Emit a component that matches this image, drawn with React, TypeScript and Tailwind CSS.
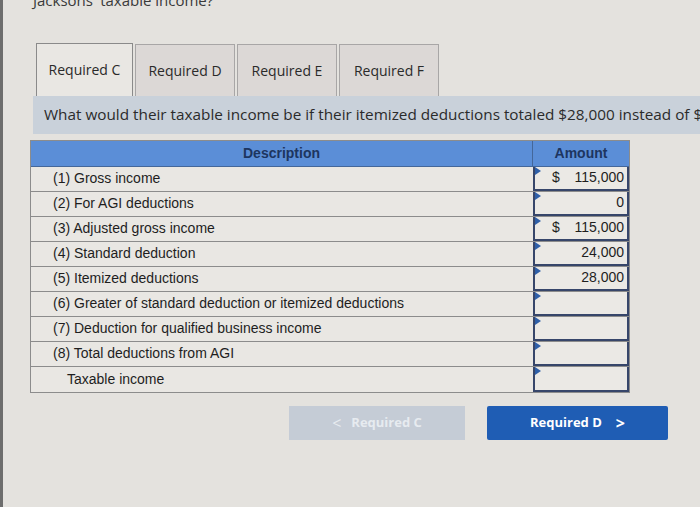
import React from 'react';

type Row = { label: string; dollar?: boolean; value?: string; indent?: boolean };

const rows: Row[] = [
    { label: '(1) Gross income', dollar: true, value: '115,000' },
    { label: '(2) For AGI deductions', value: '0' },
    { label: '(3) Adjusted gross income', dollar: true, value: '115,000' },
    { label: '(4) Standard deduction', value: '24,000' },
    { label: '(5) Itemized deductions', value: '28,000' },
    { label: '(6) Greater of standard deduction or itemized deductions' },
    { label: '(7) Deduction for qualified business income' },
    { label: '(8) Total deductions from AGI' },
    { label: 'Taxable income', indent: true },
];

const tabs = ['Required C', 'Required D', 'Required E', 'Required F'];

const Flag = () => (
    <span className="absolute left-0 top-0 w-0 h-0 border-t-[4px] border-b-[4px] border-l-[6px] border-t-transparent border-b-transparent border-l-[#2f5fa8]" />
);

export default function App() {
    return (
        <div className="w-[700px] h-[507px] overflow-hidden bg-[#e4e2de] border-l-[3px] border-[#6d6d6d] font-['Open_Sans',sans-serif] text-[#2a2a2a]">
            <p className="-mt-[11px] ml-[30px] text-[15px] text-[#3a3a3a]">Jacksons' taxable income?</p>

            {/* tabs */}
            <div className="mt-[31px] ml-[33px] flex gap-[2px] items-end">
                {tabs.map((t, i) => (
                    <div
                        key={t}
                        className={
                            i === 0
                                ? 'w-[97px] h-[53px] flex items-center justify-center text-[14px] bg-[#e9e7e3] border border-b-0 border-[#8a8a8a]'
                                : 'w-[100px] h-[52px] flex items-center justify-center text-[14px] bg-[#dcd8d6] border border-b-0 border-[#a8a6a6]'
                        }
                    >
                        {t}
                    </div>
                ))}
            </div>

            {/* question bar */}
            <div className="ml-[30px] h-[38px] bg-[#c9d1da] flex items-center pl-[11px] whitespace-nowrap text-[15.3px] text-[#2b2b2b]">
                What would their taxable income be if their itemized deductions totaled $28,000 instead of $
            </div>

            {/* table */}
            <div className="mt-[6px] ml-[27px] w-[600px] border border-[#8c8c8c] bg-[#e9e7e3] font-['Liberation_Sans',sans-serif] text-[14px] text-[#1e1e1e]">
                <div className="flex h-[26px] bg-[#5b8ed7] border-b border-[#44679a]">
                    <div className="flex-1 flex items-center justify-center font-bold text-[#1d3560] border-r border-[#44679a]">Description</div>
                    <div className="w-[96px] flex items-center justify-center font-bold text-[#1d3560]">Amount</div>
                </div>
                {rows.map((r, i) => (
                    <div key={r.label} className={`flex h-[25px] ${i < rows.length - 1 ? 'border-b border-[#8c8c8c]' : ''}`}>
                        <div className={`flex-1 flex items-center ${r.indent ? 'pl-[36px]' : 'pl-[22px]'}`}>{r.label}</div>
                        <div className="relative w-[96px] flex items-center justify-between px-[3px] bg-[#ebe9e5] border-x-2 border-b-2 border-[#37466a]">
                            <Flag />
                            <span className="pl-[14px]">{r.dollar ? '$' : ''}</span>
                            <span>{r.value ?? ''}</span>
                        </div>
                    </div>
                ))}
            </div>

            {/* nav buttons */}
            <div className="mt-[13px] ml-[286px] flex gap-[22px]">
                <div className="w-[176px] h-[34px] bg-[#c5ccd6] flex items-center justify-center gap-[10px] text-[#e7ebf0] text-[13px] font-bold">
                    <span className="text-[16px] font-normal">&lt;</span>
                    Required C
                </div>
                <div className="w-[181px] h-[34px] bg-[#1f5db4] rounded-[2px] flex items-center justify-center gap-[14px] text-white text-[13px] font-bold">
                    Required D
                    <span className="text-[16px]">&gt;</span>
                </div>
            </div>
        </div>
    );
}
